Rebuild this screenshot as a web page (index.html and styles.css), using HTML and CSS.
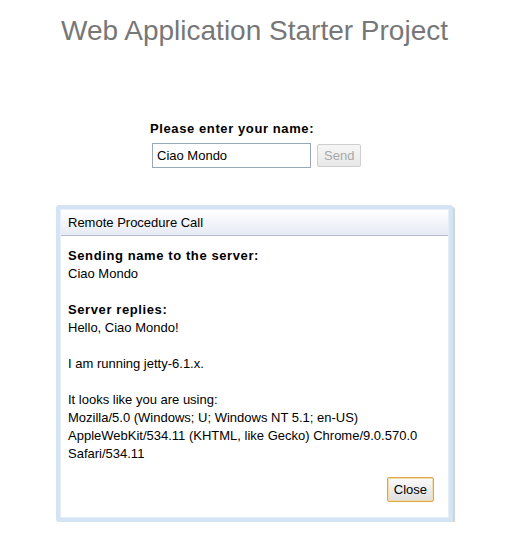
FILE: index.html
```html
<!DOCTYPE html>
<html>
<head>
<meta charset="utf-8">
<title>Web Application Starter Project</title>
<link rel="stylesheet" href="styles.css">
</head>
<body>
<h1 class="title">Web Application Starter Project</h1>
<div class="form">
  <div class="form-label">Please enter your name:</div>
  <div class="form-row">
    <input class="name-input" type="text" value="Ciao Mondo">
    <button class="btn btn-disabled" disabled>Send</button>
  </div>
</div>
<div class="dialog">
  <div class="dialog-inner">
    <div class="caption">Remote Procedure Call</div>
    <div class="dialog-body">
      <div class="strong">Sending name to the server:</div>
      <div>Ciao Mondo</div>
      <div class="blank"></div>
      <div class="strong">Server replies:</div>
      <div>Hello, Ciao Mondo!</div>
      <div class="blank"></div>
      <div>I am running jetty-6.1.x.</div>
      <div class="blank"></div>
      <div>It looks like you are using:</div>
      <div>Mozilla/5.0 (Windows; U; Windows NT 5.1; en-US) AppleWebKit/534.11 (KHTML, like Gecko) Chrome/9.0.570.0 Safari/534.11</div>
      <div class="actions">
        <button class="btn btn-focus">Close</button>
      </div>
    </div>
  </div>
</div>
</body>
</html>
```
FILE: styles.css
```css
html, body {
  margin: 0;
  padding: 0;
  background: #ffffff;
}
body {
  font-family: "Liberation Sans", Arial, sans-serif;
  font-size: 13px;
  color: #000;
}
.title {
  margin: 15px 0 0;
  font-size: 28px;
  line-height: 32px;
  font-weight: normal;
  color: #777777;
  text-align: center;
}
.form {
  width: 209px;
  margin: 74px auto 0;
  display: flex;
  flex-direction: column;
  gap: 6px;
}
.form-label {
  font-weight: bold;
  letter-spacing: 0.6px;
  line-height: 16px;
}
.form-row {
  display: flex;
  align-items: center;
  gap: 6px;
  padding-left: 2px;
}
.name-input {
  box-sizing: border-box;
  width: 159px;
  height: 25px;
  border: 1px solid #98a8b8;
  padding: 2px 4px;
  font-family: "Liberation Sans", Arial, sans-serif;
  font-size: 13px;
  color: #000;
  outline: none;
}
.btn {
  box-sizing: border-box;
  height: 23px;
  padding: 0 6px;
  font-family: "Liberation Sans", Arial, sans-serif;
  font-size: 13px;
  border-radius: 2px;
  background: linear-gradient(#fafafa, #e4e4e4);
  cursor: pointer;
}
.btn-disabled {
  color: #a8a8a8;
  border: 1px solid #cfcfcf;
  background: linear-gradient(#f6f6f6, #e8e8e8);
}
.btn.btn-focus {
  height: 25px;
  padding: 0 6px;
  color: #000;
  border: 1px solid #dba54e;
  box-shadow: inset 0 0 0 1px #f6dca8;
  background: linear-gradient(#fbfbfb, #dedede);
}
.dialog {
  box-sizing: border-box;
  width: 397px;
  margin: 37px auto 0;
  border: 4px solid #d4e4f4;
  border-radius: 3px;
  box-shadow: 2px 2px 1px rgba(0, 0, 0, 0.18);
}
.dialog-inner {
  background: #fff;
  border: 1px solid #e6eef8;
}
.caption {
  height: 25px;
  line-height: 26px;
  padding-left: 7px;
  background: linear-gradient(#ffffff, #e6eaf4);
  border-bottom: 1px solid #b4bccc;
  color: #000;
}
.dialog-body {
  padding: 11px 14px 15px 7px;
  line-height: 18px;
}
.strong {
  font-weight: bold;
  letter-spacing: 0.6px;
}
.blank {
  height: 18px;
}
.actions {
  display: flex;
  justify-content: flex-end;
  margin-top: 14px;
}
```
